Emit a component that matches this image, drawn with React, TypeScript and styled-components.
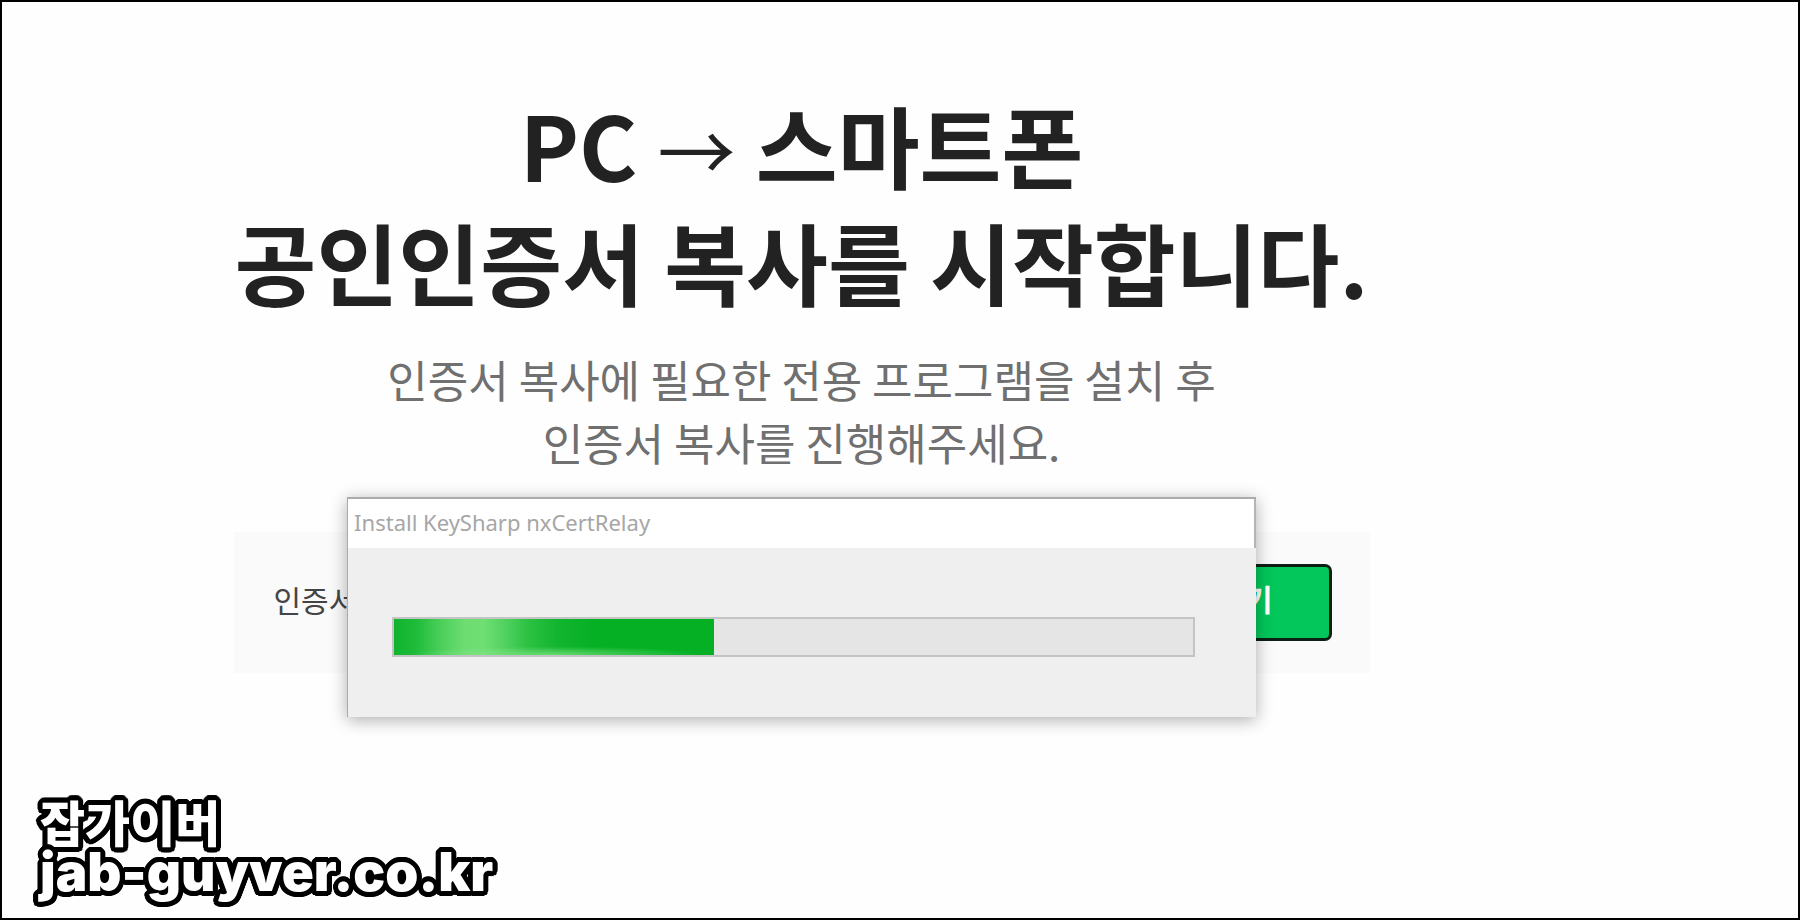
import React from "react";
import styled, { createGlobalStyle } from "styled-components";

const GlobalStyle = createGlobalStyle`
  * { box-sizing: border-box; }
  html { height: 100%; }
  body {
    margin: 0;
    height: 100%;
    background: #fefefe;
    font-family: "Noto Sans CJK KR", "Noto Sans", sans-serif;
  }
  #root { min-height: 100%; display: flex; }
`;

const Frame = styled.div`
  position: relative;
  flex: 1;
  display: flex;
  flex-direction: column;
  justify-content: space-between;
  border: 2px solid #000;
  background: #fefefe;
`;

const Content = styled.main`
  display: flex;
  flex-direction: column;
  align-items: center;
  padding: 83px 197px 0 0;
`;

const Title = styled.h1`
  margin: 0;
  color: #222;
  font-size: 89px;
  font-weight: 700;
  line-height: 117px;
  text-align: center;
  white-space: nowrap;
`;

const Arrow = styled.span`
  font-size: 78px;
  font-weight: 400;
  line-height: 78px;
`;

const Description = styled.p`
  margin: 29px 0 0;
  color: #707070;
  font-size: 44px;
  font-weight: 400;
  line-height: 63px;
  text-align: center;
  white-space: nowrap;
`;

const ActionArea = styled.div`
  position: relative;
  width: 100%;
  max-width: 1136px;
  margin-top: 58px;
`;

const ActionCard = styled.section`
  display: flex;
  align-items: center;
  justify-content: space-between;
  padding: 32px 38px 32px 40px;
  background: #fafafa;
`;

const CardLabel = styled.span`
  padding-bottom: 8px;
  color: #444;
  font-size: 30px;
  line-height: 40px;
`;

const StartButton = styled.button`
  padding: 12px 56px 20px;
  border: 3px solid #0c1f14;
  border-radius: 7px;
  background: #03c75a;
  color: #fff;
  font: inherit;
  font-size: 30px;
  font-weight: 700;
  line-height: 39px;
`;

const Dialog = styled.div`
  position: absolute;
  top: -35px;
  left: 10%;
  right: 10%;
  border-top: 2px solid #ababab;
  border-left: 1px solid #ababab;
  background: #efefef;
  box-shadow: 0 3px 16px rgba(0, 0, 0, 0.32);
`;

const DialogTitle = styled.h2`
  margin: 0;
  padding: 7px 6px 10px;
  border-right: 2px solid #b4b4b4;
  background: #fff;
  color: #a6a6a6;
  font-family: "Noto Sans", "Open Sans", sans-serif;
  font-size: 22px;
  font-weight: 400;
  line-height: 32px;
`;

const DialogBody = styled.div`
  padding: 69px 61px 60px 44px;
`;

const Track = styled.div`
  height: 40px;
  border: 2px solid #c4c4c4;
  background: #e5e5e5;
`;

const Fill = styled.div`
  height: 100%;
  background:
    radial-gradient(ellipse 46% 24% at 50% 100%, rgba(140, 232, 140, 0.7), transparent),
    linear-gradient(
      to right,
      #10b32e,
      #1fbc39 7%,
      #4dd05c 15%,
      #6ddd72 22%,
      #6fdf74 28%,
      #54d362 34%,
      #2cc142 42%,
      #12b52f 51%,
      #06b025 62%
    );
`;

const outline = Array.from({ length: 24 }, (_, i) => {
  const angle = (i / 24) * Math.PI * 2;
  return `${(Math.cos(angle) * 5).toFixed(1)}px ${(Math.sin(angle) * 5).toFixed(1)}px 0 #000`;
}).join(", ");

const Watermark = styled.footer`
  padding: 0 0 21px 38px;
  color: #fff;
  font-weight: 900;
  text-shadow: ${outline};
  white-space: nowrap;
`;

const ChannelName = styled.div`
  font-size: 49px;
  line-height: 52px;
`;

const ChannelAddress = styled.div`
  font-family: Inter, sans-serif;
  font-size: 53px;
  line-height: 50px;
`;

const PROGRESS = 40;

export default function App() {
  return (
    <>
      <GlobalStyle />
      <Frame>
        <Content>
          <Title>
            PC <Arrow>→</Arrow> 스마트폰
            <br />
            공인인증서 복사를 시작합니다.
          </Title>
          <Description>
            인증서 복사에 필요한 전용 프로그램을 설치 후
            <br />
            인증서 복사를 진행해주세요.
          </Description>
          <ActionArea>
            <ActionCard>
              <CardLabel>인증서</CardLabel>
              <StartButton type="button">복사하기</StartButton>
            </ActionCard>
            <Dialog role="dialog" aria-labelledby="install-title">
              <DialogTitle id="install-title">Install KeySharp nxCertRelay</DialogTitle>
              <DialogBody>
                <Track
                  role="progressbar"
                  aria-labelledby="install-title"
                  aria-valuenow={PROGRESS}
                  aria-valuemin={0}
                  aria-valuemax={100}
                >
                  <Fill style={{ width: `${PROGRESS}%` }} />
                </Track>
              </DialogBody>
            </Dialog>
          </ActionArea>
        </Content>
        <Watermark>
          <ChannelName>잡가이버</ChannelName>
          <ChannelAddress>jab-guyver.co.kr</ChannelAddress>
        </Watermark>
      </Frame>
    </>
  );
}
